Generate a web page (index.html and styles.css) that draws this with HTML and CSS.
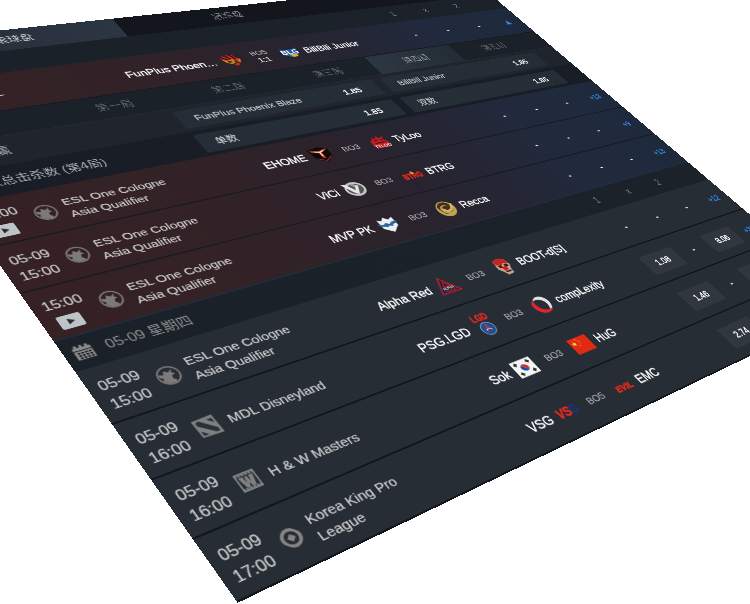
FILE: index.html
```html
<!DOCTYPE html>
<html lang="zh-CN">
<head>
<meta charset="utf-8">
<title>电竞盘口</title>
<link rel="stylesheet" href="styles.css">
</head>
<body>
<svg width="0" height="0" class="defs">
  <symbol id="globe" viewBox="0 0 26 26"><circle cx="13" cy="13" r="11.6" fill="none" stroke="#7d7a7a" stroke-width="1.8"/><path d="M3 9L8 11L10 6L14 9L19 6L17 10L20 13L16 14L15 18L18 21L16 24L9 23L4 19L6 15L3 13Z" fill="#7d7a7a"/></symbol>
  <symbol id="dota" viewBox="0 0 26 26"><path d="M1 2L24 1L25 25L2 24Z" fill="#7f8080"/><path d="M4 5L8 4L22 18L22 22L18 22L4 9ZM16 5H22V11ZM4 16L10 22H4Z" fill="#2b3138"/></symbol>
  <symbol id="war" viewBox="0 0 26 26"><path d="M3 3H23V23H3Z" fill="none" stroke="#7f8080" stroke-width="1.800"/><path d="M2 4.500H24M2 21.500H24" stroke="#7f8080" stroke-width="3" stroke-dasharray="3 .8"/><path d="M5 7H10V8L10.500 15L12 7H14L15.500 15L16 8V7H21L18 20H14.500L13 15L11.500 20H8Z" fill="#7f8080"/></symbol>
  <symbol id="king" viewBox="0 0 26 26"><circle cx="13" cy="13" r="9" fill="none" stroke="#858585" stroke-width="3.600"/><path d="M13 8.500L17.500 13L13 17.500L8.500 13Z" fill="#858585"/><path d="M17 1L24 9M9 25L2 17" stroke="#272d35" stroke-width="1.500"/></symbol>
  <symbol id="play" viewBox="0 0 24 18"><rect width="24" height="18" rx="2" fill="#bcc4c8"/><path d="M9 5L16 9L9 13Z" fill="#33282b"/></symbol>
</svg>
<main class="board">
  <nav class="tabs"><span class="tab on live">滚球盘</span><span class="tab">冠军盘</span><span class="tab">早盘</span></nav>
  <div class="head"><span class="title"></span><span>1</span><span>x</span><span>2</span></div>

  <div class="row hot first">
    <div class="time">2:14</div><div class="icon"></div><div class="league">LPL</div>
    <div class="home">FunPlus Phoen…</div>
    <svg class="logo" viewBox="0 0 28 28"><path d="M1 5L6 9L5 2L11 8L12 1L17 7L20 2L22 10L27 13L24 20L17 19L12 21L4 16Z" fill="#d92a20"/><path d="M2 11L9 14L14 12L20 15L26 13L23 20L17 18L11 21L5 18Z" fill="#c99a18"/><path d="M4 7L10 12M11 5L14 12M18 5L20 13M7 16L13 17M16 16L22 17" stroke="#251015" stroke-width="2.400"/><path d="M12 22L19 20L21 23L16 26Z" fill="#c9271d"/></svg>
    <div class="bo">BO5<b>1:1</b></div>
    <svg class="logo" viewBox="0 0 28 28"><path d="M2 5L7 8H22L27 5L24 20L14 25L4 20Z" fill="#245fa5"/><path d="M11 18H21V24H13Z" fill="#d8b23a"/><text x="1" y="18" class="mark wht tall" textLength="26" lengthAdjust="spacingAndGlyphs">BLG</text></svg>
    <div class="away">BiliBili Junior</div>
    <i>-</i><i>-</i><i>-</i><em>▲</em>
  </div>

  <nav class="maps"><span>全场</span><span>第一局</span><span>第二局</span><span>第三局</span><span class="on">第四局</span><span>第五局</span></nav>
  <div class="bet"><span class="label">单局独赢</span><div class="odd"><span>FunPlus Phoenix Blaze</span><b>1.85</b></div><div class="odd"><span>BiliBili Junior</span><b>1.85</b></div></div>
  <div class="bet dark"><span class="label">单双总击杀数 (第4局)</span><div class="odd"><span>单数</span><b>1.85</b></div><div class="odd"><span>双数</span><b>1.85</b></div></div>

  <div class="row hot">
    <div class="time">15:00<svg class="play"><use href="#play"/></svg></div><div class="icon"><svg><use href="#globe"/></svg></div><div class="league">ESL One Cologne<br>Asia Qualifier</div>
    <div class="home">EHOME</div>
    <svg class="logo" viewBox="0 0 28 28"><path d="M0 4L15 1L27 5L26 20L14 28L3 21Z" fill="#0d0a0c"/><path d="M2 5L14 8L26 5L24 8L16 11V22L12 20V11L4 9Z" fill="#b8432f"/><path d="M7 7L14 9L21 7L20 9L15 11V18L13 17V11L8 9Z" fill="#ffd2b5"/><path d="M4 20L14 26L25 19" fill="none" stroke="#a3261d" stroke-width="1.500"/></svg>
    <div class="bo">BO3</div>
    <svg class="logo" viewBox="0 0 28 28"><path d="M3 9L8 8L7 3L12 7L16 2L18 7L24 5L22 11L26 15L24 25L5 24L2 17Z" fill="#bd2024"/><path d="M8 11L14 9M17 11L21 10M7 15H22" stroke="#61151a" stroke-width="2"/><text x="2" y="24" class="mark wht sm" textLength="25" lengthAdjust="spacingAndGlyphs">TYLOO</text></svg>
    <div class="away">TyLoo</div>
    <i>-</i><i>-</i><i>-</i><em>+13</em>
  </div>
  <div class="row hot">
    <div class="time">05-09<br>15:00</div><div class="icon"><svg><use href="#globe"/></svg></div><div class="league">ESL One Cologne<br>Asia Qualifier</div>
    <div class="home">ViCi</div>
    <svg class="logo" viewBox="0 0 28 28"><ellipse cx="15" cy="15" rx="12" ry="10.500" fill="#55555a" stroke="#c9caca" stroke-width="3"/><path d="M1 4L7 5L14 17L18 9L22 10L15 24L11 22Z" fill="#e6e6e6"/><path d="M12 6L19 7L16 12Z" fill="#a5a5a8"/></svg>
    <div class="bo">BO3</div>
    <svg class="logo" viewBox="0 0 28 28"><text x="0" y="20" class="mark red tall" textLength="28" lengthAdjust="spacingAndGlyphs">BTRG</text><path d="M13 11L15 7L18 11L16 14Z" fill="#e8a421"/></svg>
    <div class="away">BTRG</div>
    <i>-</i><i>-</i><i>-</i><em>+9</em>
  </div>
  <div class="row hot last">
    <div class="time">15:00<svg class="play"><use href="#play"/></svg></div><div class="icon"><svg><use href="#globe"/></svg></div><div class="league">ESL One Cologne<br>Asia Qualifier</div>
    <div class="home">MVP PK</div>
    <svg class="logo" viewBox="0 0 28 28"><path d="M4 4L9 7L14 2L19 7L25 4V18L14 27L4 19Z" fill="#e9f0f3"/><path d="M0 11L8 13L12 11L16 14L20 11L28 11L24 15L20 15L18 18L14 16L11 18L8 16L3 15Z" fill="#2d6499"/></svg>
    <div class="bo">BO3</div>
    <svg class="logo" viewBox="0 0 28 28"><circle cx="14" cy="14" r="13" fill="#c3a052"/><path d="M4 9Q8 1 18 3Q26 8 23 16Q19 22 12 19Q7 15 11 10Q16 7 19 11Q18 8 14 7Q8 7 6 13Q6 20 13 23Q6 23 4 9Z" fill="#3e3021"/><path d="M10 13Q12 20 19 17Q24 14 25 7" fill="none" stroke="#d6b567" stroke-width="3.500"/></svg>
    <div class="away">Recca</div>
    <i>-</i><i>-</i><i>-</i><em>+13</em>
  </div>

  <div class="head"><span class="title"><svg class="cal" viewBox="0 0 24 24"><path d="M2 5H22V22H2Z" fill="#8b8b8b"/><path d="M6 2V7M12 2V7M18 2V7" stroke="#8b8b8b" stroke-width="3"/><path d="M2 9.500H22" stroke="#1b2229" stroke-width="1.200"/><path d="M5 13H20M5 16.500H20M5 20H20" stroke="#1b2229" stroke-width="2.200" stroke-dasharray="2.800 1.300"/></svg>05-09 星期四</span><span>1</span><span>x</span><span>2</span></div>

  <div class="row">
    <div class="time">05-09<br>15:00</div><div class="icon"><svg><use href="#globe"/></svg></div><div class="league">ESL One Cologne<br>Asia Qualifier</div>
    <div class="home">Alpha Red</div>
    <svg class="logo" viewBox="0 0 28 28"><path d="M10 2L27 25H1Z" fill="#1c2142" stroke="#ad2027" stroke-width="2"/><path d="M12 9L18 16H9Z" fill="none" stroke="#ad2027" stroke-width="1.500"/><text x="6" y="20" class="mark wht xs" textLength="15" lengthAdjust="spacingAndGlyphs">ALPHA</text><path d="M6 22.500H22" stroke="#ad2027" stroke-width="1.500"/></svg>
    <div class="bo">BO3</div>
    <svg class="logo" viewBox="0 0 28 28"><path d="M5 3Q14 -1 22 4L24 13L21 19L20 26L11 27L8 21L4 16Z" fill="#c8a392"/><path d="M5 3Q14 -1 22 4L23 11L16 9L13 12L5 9ZM10 14H18L17 20H11Z" fill="#c32520"/><path d="M7 11H12V15H8ZM16 11H21V15H16ZM11 21H19V23H11Z" fill="#381918"/></svg>
    <div class="away">BOOT-d[S]</div>
    <i>-</i><i>-</i><i>-</i><em>+12</em>
  </div>
  <div class="row">
    <div class="time">05-09<br>16:00</div><div class="icon"><svg><use href="#dota"/></svg></div><div class="league">MDL Disneyland</div>
    <div class="home">PSG.LGD</div>
    <svg class="logo" viewBox="0 0 28 28"><text x="4" y="7" class="mark red tall" textLength="22" lengthAdjust="spacingAndGlyphs">LGD</text><circle cx="15" cy="19" r="9" fill="#1c4f94" stroke="#8fa6c4" stroke-width="1"/><path d="M15 12L16 18L18 23M15 12L14 18L12 23" fill="none" stroke="#d9303a" stroke-width="1.300"/><path d="M11 21Q15 18 19 21" fill="none" stroke="#d9d4c0"/></svg>
    <div class="bo">BO3</div>
    <svg class="logo" viewBox="0 0 28 28"><path d="M7 6Q14 -1 22 4Q29 11 25 19Q22 25 16 26Q23 20 21 12Q17 4 7 6Z" fill="#dfe3e3"/><path d="M8 4Q-2 10 2 19Q7 29 18 26Q22 25 23 22Q13 25 8 17Q5 10 8 4Z" fill="#d92730"/></svg>
    <div class="away">compLexity</div>
    <i><b>1.08</b></i><i>-</i><i><b>8.06</b></i><em>+33</em>
  </div>
  <div class="row">
    <div class="time">05-09<br>16:00</div><div class="icon"><svg><use href="#war"/></svg></div><div class="league">H &amp; W Masters</div>
    <div class="home">Sok</div>
    <svg class="logo" viewBox="0 0 28 28"><path d="M0 3H28V25H0Z" fill="#f4f4f4"/><path d="M9 12A5.500 5.500 0 0 1 19 16Q16 18 14 14Q12 10 9 12Z" fill="#cd2e3a"/><path d="M9 12A5.500 5.500 0 0 0 19 16Q16 18 14 14Q12 10 9 12Z" fill="#1a4fa0"/><path d="M4 9L7 6M21 6L24 9M4 19L7 22M21 22L24 19" stroke="#303030" stroke-width="3.500"/></svg>
    <div class="bo">BO3</div>
    <svg class="logo" viewBox="0 0 28 28"><path d="M0 3H28V25H0Z" fill="#df2b12"/><path d="M6 7L7 9.500H9.500L7.600 11L8.300 13.500L6 12L3.700 13.500L4.400 11L2.500 9.500H5Z" fill="#ffd83a"/><path d="M11 5H12.200V6.200H11ZM13 8H14.200V9.200H13ZM13 11H14.200V12.200H13ZM11 14H12.200V15.200H11Z" fill="#ffd83a"/></svg>
    <div class="away">HuG</div>
    <i><b>1.46</b></i><i>-</i><i><b>2.63</b></i><em>+5</em>
  </div>
  <div class="row">
    <div class="time">05-09<br>17:00</div><div class="icon"><svg><use href="#king"/></svg></div><div class="league">Korea King Pro<br>League</div>
    <div class="home">VSG</div>
    <svg class="logo" viewBox="0 0 28 28"><text x="0" y="19" class="mark red big" textLength="19" lengthAdjust="spacingAndGlyphs">VS</text><text x="18" y="19" class="mark navy big" textLength="11" lengthAdjust="spacingAndGlyphs">G</text></svg>
    <div class="bo">BO5</div>
    <svg class="logo" viewBox="0 0 28 28"><text x="2" y="19" class="mark red it" textLength="25" lengthAdjust="spacingAndGlyphs">EVIL</text></svg>
    <div class="away">EMC</div>
    <i><b>2.74</b></i><i>-</i><i><b>1.40</b></i><em>+7</em>
  </div>
</main>
</body>
</html>
```
FILE: styles.css
```css
html, body { margin: 0; width: 750px; height: 604px; overflow: hidden; background: #fff; }
.defs { position: absolute; }
.board {
  width: 980px; height: 824px; overflow: hidden;
  background: #1b2229; color: #ccc;
  font: 16px/20px "Liberation Sans", "Noto Sans CJK SC", sans-serif;
  transform-origin: 0 0;
  /* tilted plane: rows recede toward the upper right */
  transform: matrix3d(.866849, -.076223, 0, .000475888, .396781, .47605, 0, -.000330274, 0, 0, 1, 0, -153.942, 46.517, 0, 1);
}
.tabs { display: grid; grid-template-columns: repeat(3, 1fr); height: 42px; background: #13161d; }
.tab { display: flex; align-items: center; justify-content: center; color: #85868a; }
.tab.on { background: linear-gradient(90deg, #262d39, #2c3542); color: #c4c7ca; }
.tab.live { padding-left: 45px; }
.head { display: grid; grid-template-columns: 723px repeat(3, 65.3px) 1fr; align-items: center; height: 42px; background: linear-gradient(90deg, #1a2129, #1b2229); font-size: 16px; color: #7a7d80; text-align: center; }
.title { display: flex; align-items: center; gap: 12px; padding-left: 8px; font-size: 16px; color: #8f8f8f; }
.cal { width: 22px; height: 22px; }

.row { display: grid; grid-template-columns: 62px 37px 181px 141px 28px 65px 28px 181px repeat(3, 65.3px) 1fr; align-items: center; box-sizing: border-box; height: 70px; padding-top: 4px; background: #272d35; border-bottom: 2px solid #11151d; }
.row.hot { background: linear-gradient(90deg, #362124 0, #312227 30%, #2a232c 47%, #252533 62%, #212a3c 80%, #1e2a3c 100%); border-color: #181b22; }
.row.last { border-color: #202d3d; }
.time { padding: 2px 0 0 10.5px; line-height: 24px; color: #d0d0d0; -webkit-text-stroke: .2px; }
.play { display: block; width: 24px; height: 18px; margin: 4px 0 2px 4px; }
.icon svg { display: block; width: 25px; height: 25px; margin-left: 2px; }
.league { font-size: 15.3px; white-space: nowrap; padding-top: 1px; color: #d0d0d0; -webkit-text-stroke: .2px; }
.home, .away { color: #fff; font-size: 16.5px; white-space: nowrap; -webkit-text-stroke: .4px; }
.home { text-align: right; padding-right: 10px; }
.away { padding-left: 10px; }
.logo { width: 30px; height: 30px; margin-left: -1px; overflow: visible; }
.bo { text-align: center; font-size: 13.5px; color: #a8aaae; -webkit-text-stroke: .2px; }
.first .bo { line-height: 17px; }
.bo b { display: block; font-weight: 400; color: #f0f0f0; font-size: 14.5px; }
i { display: flex; justify-content: center; font-style: normal; color: #f0f0f0; -webkit-text-stroke: .5px; }
i b { width: 64px; height: 35px; background: #31373f; color: #fff; font: 14px/35px "Liberation Sans", sans-serif; text-align: center; }
em { font-style: normal; text-align: center; font-size: 14px; color: #3089ea; -webkit-text-stroke: .5px; }
.first em { font-size: 18px; }

.maps { display: flex; height: 42px; padding-right: 30px; background: #1b2129; }
.maps span { flex: 1; display: flex; align-items: center; justify-content: center; color: #62666b; }
.maps .on { background: linear-gradient(90deg, #2c3743, #242d36); color: #989ca0; }
.bet { display: grid; grid-template-columns: 274px 309px 309px; gap: 0 15px; align-items: center; height: 48px; box-sizing: border-box; background: #20242c; border-top: 1px solid #272c33; }
.bet.dark { background: #191d26; border-top-color: #191d26; }
.label { padding-left: 24px; color: #acaeb0; margin-right: -15px; }
.odd { display: flex; justify-content: space-between; margin-left: 9px; margin-right: -9px; height: 35px; padding: 0 30px 0 21px; background: #252e36; font-size: 15.3px; line-height: 36px; color: #c0c2c4; -webkit-text-stroke: .3px; }
.odd b { font-weight: 400; color: #fff; -webkit-text-stroke: .5px; }

.mark { font: 700 12px "Liberation Sans", sans-serif; }
.wht { fill: #fff; }
.red { fill: #e62a1f; stroke: #e62a1f; stroke-width: .6px; }
.navy { fill: #1f3272; stroke: #1f3272; stroke-width: .8px; }
.mark.sm { font-size: 8px; }
.mark.xs { font-size: 5px; }
.mark.tall { font-size: 13px; }
.mark.big { font-size: 16px; font-style: italic; }
.mark.it { font-size: 11px; font-style: italic; }
```
